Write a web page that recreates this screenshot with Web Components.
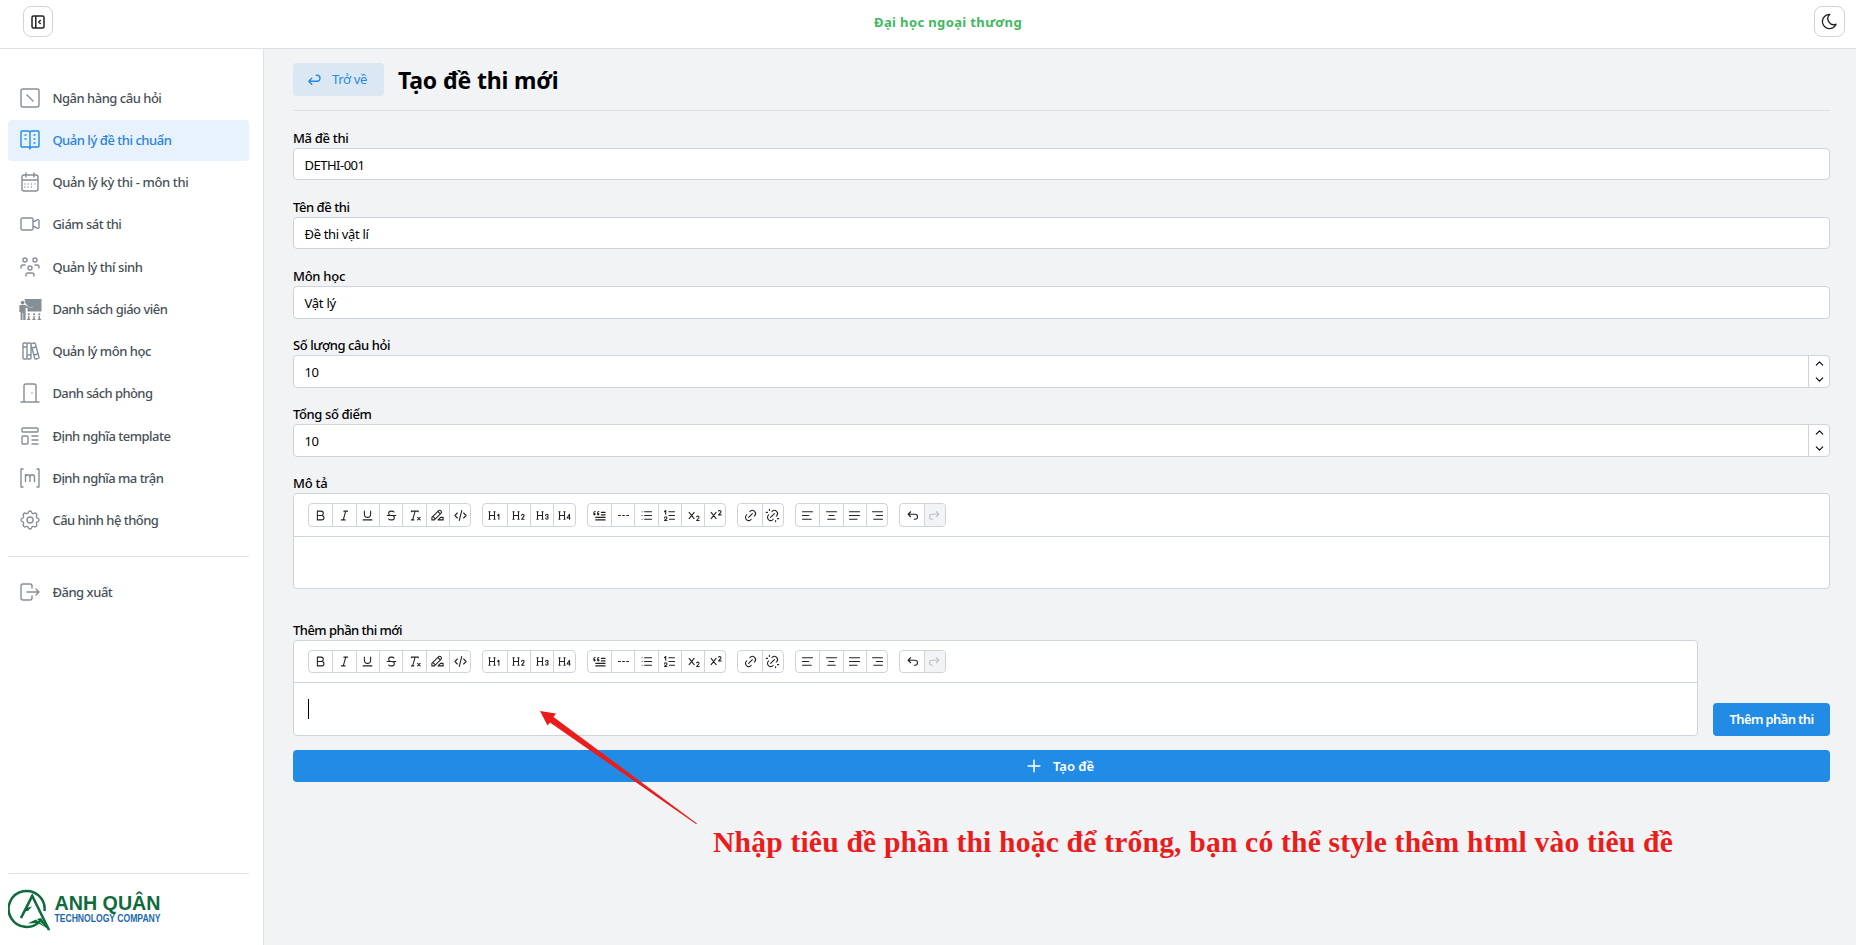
<!DOCTYPE html>
<html lang="vi">
<head>
<meta charset="utf-8">
<title>Tạo đề thi mới</title>
<style>
html,body{margin:0;height:100%;overflow:hidden}
body{font:13px/20px "Noto Sans","Open Sans",sans-serif;color:#000}
</style>
</head>
<body>
<exam-app></exam-app>
<script>
const ICONS={
collapse:'M4 6a2 2 0 0 1 2-2h12a2 2 0 0 1 2 2v12a2 2 0 0 1-2 2H6a2 2 0 0 1-2-2zM9 4v16M15 10l-2 2l2 2',
moon:'M12 3c.132 0 .263 0 .393 0a7.5 7.5 0 0 0 7.92 12.446a9 9 0 1 1-8.313-12.454z',
back:'M9 11l-4 4l4 4m-4-4h11a4 4 0 0 0 0-8h-1',
plus:'M12 5v14M5 12h14',
bank:'M3 5a2 2 0 0 1 2-2h14a2 2 0 0 1 2 2v14a2 2 0 0 1-2 2H5a2 2 0 0 1-2-2zM9 9l6 6',
vocab:'M10 19h-6a1 1 0 0 1-1-1v-14a1 1 0 0 1 1-1h6a2 2 0 0 1 2 2a2 2 0 0 1 2-2h6a1 1 0 0 1 1 1v14a1 1 0 0 1-1 1h-6a2 2 0 0 0-2 2a2 2 0 0 0-2-2zM12 5v16M7 7h1M7 11h1M16 7h1M16 11h1M16 15h1',
calendar:'M4 7a2 2 0 0 1 2-2h12a2 2 0 0 1 2 2v12a2 2 0 0 1-2 2H6a2 2 0 0 1-2-2zM16 3v4M8 3v4M4 10h16M7 14h.01M10 14h.01M13.5 14h.01M17 14h.01M7 17h.01M10 17h.01M13.5 17h.01',
video:'M4.5 6h9a1.5 1.5 0 0 1 1.500 1.500v9a1.500 1.500 0 0 1-1.500 1.500h-9a1.500 1.500 0 0 1-1.500-1.500v-9a1.500 1.500 0 0 1 1.500-1.500zM15 10l4.553-2.276a1 1 0 0 1 1.447.894v6.764a1 1 0 0 1-1.447.894L15 14z',
group:'M10 13a2 2 0 1 0 4 0a2 2 0 0 0-4 0M8 21v-1a2 2 0 0 1 2-2h4a2 2 0 0 1 2 2v1M15 5a2 2 0 1 0 4 0a2 2 0 0 0-4 0M17 10h2a2 2 0 0 1 2 2v1M5 5a2 2 0 1 0 4 0a2 2 0 0 0-4 0M3 13v-1a2 2 0 0 1 2-2h2',
books:'M5 5a1 1 0 0 1 1-1h2a1 1 0 0 1 1 1v14a1 1 0 0 1-1 1H6a1 1 0 0 1-1-1zM9 5a1 1 0 0 1 1-1h2a1 1 0 0 1 1 1v14a1 1 0 0 1-1 1h-2a1 1 0 0 1-1-1zM5 8h4M9 16h4M13.803 4.560l2.184-.530c.562-.135 1.133.190 1.282.732l3.695 13.418a1.020 1.020 0 0 1-.634 1.219l-.133.041l-2.184.530c-.562.135-1.133-.190-1.282-.732L13.036 5.820a1.020 1.020 0 0 1 .634-1.219zM14 9l4-1M16 16l3.923-.980',
door:'M3 21h18M6 21V5a2 2 0 0 1 2-2h8a2 2 0 0 1 2 2v16M14 12v.01',
template:'M5 4h14a1 1 0 0 1 1 1v2a1 1 0 0 1-1 1H5a1 1 0 0 1-1-1V5a1 1 0 0 1 1-1zM5 12h4a1 1 0 0 1 1 1v6a1 1 0 0 1-1 1H5a1 1 0 0 1-1-1v-6a1 1 0 0 1 1-1zM14 12h6M14 16h6M14 20h6',
matrix:'M5 3H3v18h2M19 3h2v18h-2M7.500 15.500v-7M7.500 11a2.200 2.200 0 0 1 4.500 0v4.500M12 11a2.200 2.200 0 0 1 4.500 0v4.500',
gear:'M10.325 4.317c.426-1.756 2.924-1.756 3.350 0a1.724 1.724 0 0 0 2.573 1.066c1.543-.940 3.310.826 2.370 2.370a1.724 1.724 0 0 0 1.065 2.572c1.756.426 1.756 2.924 0 3.350a1.724 1.724 0 0 0-1.066 2.573c.940 1.543-.826 3.310-2.370 2.370a1.724 1.724 0 0 0-2.572 1.065c-.426 1.756-2.924 1.756-3.350 0a1.724 1.724 0 0 0-2.573-1.066c-1.543.940-3.310-.826-2.370-2.370a1.724 1.724 0 0 0-1.065-2.572c-1.756-.426-1.756-2.924 0-3.350a1.724 1.724 0 0 0 1.066-2.573c-.940-1.543.826-3.310 2.370-2.370c1 .608 2.296.070 2.572-1.065zM9 12a3 3 0 1 0 6 0a3 3 0 0 0-6 0',
logout:'M14 8V6a2 2 0 0 0-2-2H5a2 2 0 0 0-2 2v12a2 2 0 0 0 2 2h7a2 2 0 0 0 2-2v-2M9 12h12l-3-3M18 15l3-3',
bold:'M7 5h6a3.500 3.500 0 0 1 0 7H7zM13 12h1a3.500 3.500 0 0 1 0 7H7v-7',
italic:'M11 5h6M7 19h6M14 5l-4 14',
underline:'M7 5v5a5 5 0 0 0 10 0V5M5 19h14',
strike:'M5 12h14M16 6.500a4 2 0 0 0-4-1.500h-1a3.500 3.500 0 0 0 0 7h2a3.500 3.500 0 0 1 0 7h-1.500a4 2 0 0 1-4-1.500',
clear:'M17 15l4 4m0-4l-4 4M7 6V5h11v1M7 19h4M13 5l-4 14',
highlight:'M3 19h4L17.500 8.500a2.828 2.828 0 1 0-4-4L3 15v4M12.500 5.500l4 4M4.500 13.500l4 4M21 15v4h-8l4-4z',
code:'M7 8l-4 4l4 4M17 8l4 4l-4 4M14 4l-4 16',
h1:'M19 18v-8l-2 2M4 6v12M12 6v12M11 18h2M3 18h2M4 12h8M3 6h2M11 6h2',
h2:'M17 12a2 2 0 1 1 4 0c0 .591-.417 1.318-.816 1.858L17 18h4M4 6v12M12 6v12M11 18h2M3 18h2M4 12h8M3 6h2M11 6h2',
h3:'M19 14a2 2 0 1 0-2-2M17 16a2 2 0 1 0 2-2M4 6v12M12 6v12M11 18h2M3 18h2M4 12h8M3 6h2M11 6h2',
h4:'M20 18v-8l-4 6h5M4 6v12M12 6v12M11 18h2M3 18h2M4 12h8M3 6h2M11 6h2',
quote:'M6 15h15M21 19H6M15 11h6M21 7h-6M9 9h1a1 1 0 1 1-1 1V7.500a2 2 0 0 1 2-2M3 9h1a1 1 0 1 1-1 1V7.500a2 2 0 0 1 2-2',
hr:'M4 12h3M10.500 12h3M17 12h3',
list:'M9 6h11M9 12h11M9 18h11M5 6v.01M5 12v.01M5 18v.01',
numbers:'M11 6h9M11 12h9M12 18h8M4 16a2 2 0 1 1 4 0c0 .591-.500 1-1 1.500L4 20h4M6 10V4L4 6',
sub:'M5 7l8 10m-8 0l8-10M21 20h-4l3.500-4a1.730 1.730 0 0 0-3.500-2',
sup:'M5 7l8 10m-8 0l8-10M21 11h-4l3.500-4a1.730 1.730 0 0 0-3.500-2',
link:'M9 15l6-6M11 6l.463-.536a5 5 0 0 1 7.071 7.072L18 13M13 18l-.397.534a5.068 5.068 0 0 1-7.127 0a4.972 4.972 0 0 1 0-7.071L6 11',
unlink:'M17 22v-2M9 15l6-6M11 6l.463-.536a5 5 0 0 1 7.071 7.072L18 13M13 18l-.397.534a5.068 5.068 0 0 1-7.127 0a4.972 4.972 0 0 1 0-7.071L6 11M20 17h2M2 7h2M7 2v2',
left:'M4 6h16M4 12h10M4 18h14',center:'M4 6h16M8 12h8M6 18h12',justify:'M4 6h16M4 12h16M4 18h12',right:'M4 6h16M10 12h10M6 18h14',
undo:'M9 14l-4-4l4-4M5 10h11a4 4 0 1 1 0 8h-1',redo:'M15 14l4-4l-4-4M19 10H8a4 4 0 1 0 0 8h1',
up:'M6 15l6-6l6 6',down:'M6 9l6 6l6-6'
};
const TEACHER='<g fill="currentColor" stroke="none"><path d="M6.500 2h17v12.500H9.500V11l5-.500V9l-4.500.200L7.500 6.500z"/><circle cx="4.600" cy="5.600" r="1.900"/><path d="M2 8h5.200l2.300 1.600 5-.8.300 1.200-5.600 1.200L7.600 10.500V23H5.200v-7h-.7v7H2.600v-8H1.300V9z"/><circle cx="10.700" cy="17.300" r="1.100"/><circle cx="16" cy="17.300" r="1.100"/><circle cx="21.300" cy="17.300" r="1.100"/><path d="M9 23v-1l1-.6v-2.400h1.400v2.400l1 .6v1zM14.300 23v-1l1-.6v-2.400h1.400v2.400l1 .6v1zM19.600 23v-1l1-.6v-2.400H22v2.400l1 .6v1z"/></g>';

class Base extends HTMLElement{
  connectedCallback(){
    if(this.shadowRoot)return;
    this.attachShadow({mode:'open'}).innerHTML='<style>'+this.css()+'</style>'+this.html();
    this.ready&&this.ready();
  }
  a(n,d=''){return this.getAttribute(n)??d}
}
const def=(n,c)=>customElements.define(n,c);

/* Text that tracks itself to a given run width. */
def('fit-text',class extends Base{
  css(){return ':host{display:inline-block;white-space:nowrap}span{display:inline-block}'}
  html(){return '<span>'+this.a('text')+'</span>'}
  ready(){
    const s=this.shadowRoot.querySelector('span'),w=+this.a('w');
    const n=s.getBoundingClientRect().width;
    if(w&&n)s.style.letterSpacing=((w-n)/[...this.a('text')].length).toFixed(3)+'px';
  }
});
def('ui-icon',class extends Base{
  css(){return ':host{display:block;flex:none}svg{display:block}'}
  html(){const s=this.a('size',16),n=this.a('name');
    return `<svg width="${s}" height="${s}" viewBox="0 0 24 24" fill="none" stroke="currentColor" stroke-width="${this.a('sw','1.5')}" stroke-linecap="round" stroke-linejoin="round">${n==='teacher'?TEACHER:`<path d="${ICONS[n]}"/>`}</svg>`}
});
def('icon-button',class extends Base{
  css(){return ':host{display:flex;align-items:center;justify-content:center;box-sizing:border-box;width:31px;height:31px;border:1px solid #ced4da;border-radius:8px;background:#fff;color:#222}'}
  html(){return `<ui-icon name="${this.a('name')}" size="${this.a('size')}" sw="${this.a('sw','1.7')}"></ui-icon>`}
});
def('app-header',class extends Base{
  css(){return ':host{display:flex;justify-content:space-between;align-items:flex-start;box-sizing:border-box;height:49px;padding:6px 11px 0 23px;border-bottom:1px solid #dee2e6;background:#fff}icon-button:first-of-type{width:30px}fit-text{font-weight:700;color:#40b960;margin:6px 0 0 29px}'}
  html(){return '<icon-button name="collapse" size="18" sw="2"></icon-button><fit-text w="148" text="Đại học ngoại thương"></fit-text><icon-button name="moon" size="19"></icon-button>'}
});
def('nav-item',class extends Base{
  css(){return ':host{display:flex;align-items:center;box-sizing:border-box;height:41px;padding-left:10px;border-radius:4px;color:#495057;font-weight:500}ui-icon{color:#868e96;margin-right:10.400px}:host([active]){background:#e7f2fc;color:#2d83d8}:host([active]) ui-icon{color:#228be6}'}
  html(){return `<ui-icon name="${this.a('icon')}" size="24" sw="1.4"></ui-icon><fit-text w="${this.a('w')}" text="${this.a('text')}"></fit-text>`}
});
def('brand-logo',class extends Base{
  css(){return ':host{display:block}svg{display:block}'}
  html(){return `<svg width="230" height="48" viewBox="0 0 230 48">
<g fill="none" stroke="#0d6b3c"><path d="M32 34A18 18 0 1 1 36.500 24" stroke-width="2.500"/><path d="M13 31L24.200 8.800L41 43" stroke-width="2.600"/></g>
<path d="M12 32.500L18 21l6-1.500-4 4.500h-2.500zM29 32l4-1 9.500 13.500zM28 32.500q-4 1.500-8 4l10-.500 10 6z" fill="#0d6b3c"/>
<text x="46.500" y="22.500" font-family="Liberation Sans,sans-serif" font-weight="700" font-size="20" fill="#0d6b3c" textLength="106" lengthAdjust="spacingAndGlyphs">ANH QUÂN</text>
<text x="46.500" y="34.500" font-family="Liberation Sans,sans-serif" font-weight="700" font-size="11.500" fill="#1a68ad" textLength="106" lengthAdjust="spacingAndGlyphs">TECHNOLOGY COMPANY</text></svg>`}
});
def('side-bar',class extends Base{
  css(){return `:host{display:flex;flex-direction:column;box-sizing:border-box;width:264px;padding:28.300px 14px 10px 8px;border-right:1px solid #dee2e6;background:#fff}
nav{display:flex;flex-direction:column;gap:1.230px}hr{width:100%;border:0;border-top:1px solid #dee2e6;margin:0}
nav+hr{margin:15.500px 0 15px}.foot{margin-top:auto}brand-logo{padding-top:13px}`}
  html(){const it=[['bank','Ngân hàng câu hỏi',109],['vocab','Quản lý đề thi chuẩn',119],['calendar','Quản lý kỳ thi - môn thi',136],['video','Giám sát thi',69],['group','Quản lý thí sinh',90],['teacher','Danh sách giáo viên',115],['books','Quản lý môn học',98.500],['door','Danh sách phòng',100],['template','Định nghĩa template',118],['matrix','Định nghĩa ma trận',111],['gear','Cấu hình hệ thống',106]];
    return '<nav>'+it.map((x,i)=>`<nav-item icon="${x[0]}" text="${x[1]}" w="${x[2]}"${i===1?' active':''}></nav-item>`).join('')+'</nav><hr><nav-item icon="logout" text="Đăng xuất" w="60"></nav-item><div class="foot"><hr><brand-logo></brand-logo></div>'}
});
def('form-field',class extends Base{
  css(){return `:host{display:block;height:69px}label{display:block;height:20px;font-weight:500}
.in{display:flex;box-sizing:border-box;height:var(--h,33px);border:1px solid #ced4da;border-radius:4px;background:#fff;padding-left:10.500px;align-items:center;overflow:hidden}
.in fit-text{flex:1;margin-top:1px}.st{width:21px;box-sizing:border-box;align-self:stretch;border-left:1px solid #ced4da;display:flex;flex-direction:column;align-items:center;justify-content:space-around}`}
  html(){return `<label><fit-text w="${this.a('lw')}" text="${this.a('label')}"></fit-text></label><div class="in"><fit-text w="${this.a('vw')}" text="${this.a('value')}"></fit-text>${this.hasAttribute('number')?'<div class="st"><ui-icon name="up" size="13" sw="2"></ui-icon><ui-icon name="down" size="13" sw="2"></ui-icon></div>':''}</div>`}
});
def('tool-group',class extends Base{
  css(){return ':host{display:flex;box-sizing:border-box;height:var(--bh,24px);border:1px solid #ced4da;border-radius:4px;overflow:hidden;color:#222}span{box-sizing:border-box;width:23.330px;display:flex;align-items:center;justify-content:center}span:first-child{width:23px}span:last-child{width:21.300px}span+span{border-left:1px solid #ced4da}span.off{background:#f1f3f5;color:#bcc3ca}'}
  html(){return this.a('tools').split(' ').map(t=>`<span class="${t==='redo'?'off':''}"><ui-icon name="${t}" size="15" sw="1.7"></ui-icon></span>`).join('')}
});
def('rich-editor',class extends Base{
  css(){return `:host{display:block;box-sizing:border-box;height:96px;border:1px solid #ced4da;border-radius:4px;background:#fff;overflow:hidden}
.bar{display:flex;gap:11px;box-sizing:border-box;height:var(--th,43px);padding:9px 14px;border-bottom:1px solid #ced4da}
.body{padding:16px 14px}.caret{width:1px;height:20px;background:#000}`}
  html(){return '<div class="bar">'+['bold italic underline strike clear highlight code','h1 h2 h3 h4','quote hr list numbers sub sup','link unlink','left center justify right','undo redo'].map(g=>`<tool-group tools="${g}"></tool-group>`).join('')+'</div><div class="body">'+(this.hasAttribute('caret')?'<div class="caret"></div>':'')+'</div>'}
});
def('ui-button',class extends Base{
  css(){return ':host{display:flex;align-items:center;justify-content:center;box-sizing:border-box;height:33px;border-radius:4px;background:#228be6;color:#fff;font-weight:600}ui-icon{margin-right:var(--gap,8px)}:host([light]){background:#dbe7f3;color:#228be6;font-weight:400}'}
  html(){const i=this.a('icon');return (i?`<ui-icon name="${i}" size="${this.a('isize')}" sw="1.8"></ui-icon>`:'')+`<fit-text w="${this.a('w')}" text="${this.a('text')}"></fit-text>`}
});
def('exam-form',class extends Base{
  css(){return `:host{display:block;padding:14px 26px 0 29px}
.top{display:flex;align-items:center;height:33px;padding-bottom:14px;border-bottom:1px solid #dee2e6;margin-bottom:17px}
.top ui-button{width:91px;--gap:9px;padding:0 5px 1px 0}h1{margin:1px 0 0 14px;font-size:23px;line-height:32px;font-weight:700}
.s{--h:32px}label{display:block;height:20px;font-weight:500}
.row{display:grid;grid-template-columns:1fr 117px;gap:15px;align-items:end;margin:0 0 14px}
.row ui-button{box-sizing:border-box;padding-bottom:1px}
.second{--th:42px;--bh:23px;margin-top:31px}.create{height:32px;--gap:9px;padding-right:5px}`}
  html(){return `<div class="top"><ui-button light icon="back" isize="18" w="35" text="Trở về"></ui-button><h1><fit-text w="160.500" text="Tạo đề thi mới"></fit-text></h1></div>
<form-field class="s" label="Mã đề thi" lw="55.500" value="DETHI-001" vw="60"></form-field>
<form-field class="s" label="Tên đề thi" lw="56.500" value="Đề thi vật lí" vw="64"></form-field>
<form-field label="Môn học" lw="52" value="Vật lý" vw="31.500"></form-field>
<form-field label="Số lượng câu hỏi" lw="97" value="10" vw="14" number></form-field>
<form-field label="Tổng số điểm" lw="78.500" value="10" vw="14" number></form-field>
<label><fit-text w="34.500" text="Mô tả"></fit-text></label><rich-editor></rich-editor>
<div class="second"><label><fit-text w="109" text="Thêm phần thi mới"></fit-text></label><div class="row"><rich-editor caret></rich-editor><ui-button w="84" text="Thêm phần thi"></ui-button></div></div>
<ui-button class="create" icon="plus" isize="20" w="41" text="Tạo đề"></ui-button>`}
});
/* Red callout drawn over the page. */
def('red-callout',class extends Base{
  css(){return `:host{position:absolute;left:540px;top:711px;display:block;color:#ea1c1c}svg{display:block}
fit-text{position:absolute;left:173px;top:111px;font:700 29.600px/40px "Liberation Serif",serif}`}
  html(){return '<svg width="160" height="116"><path d="M0 0L16 2.500L13.500 6L157 112.500L156.300 113.300L10 11.500L7.500 14.500z" fill="currentColor"/></svg><fit-text w="960" text="Nhập tiêu đề phần thi hoặc để trống, bạn có thể style thêm html vào tiêu đề"></fit-text>'}
});
def('exam-app',class extends Base{
  css(){return ':host{display:grid;grid-template:49px 1fr/264px 1fr;position:relative;height:100vh;background:#f1f3f5;overflow:hidden}app-header{grid-column:1/-1}'}
  html(){return '<app-header></app-header><side-bar></side-bar><exam-form></exam-form><red-callout></red-callout>'}
});
</script>
</body>
</html>
